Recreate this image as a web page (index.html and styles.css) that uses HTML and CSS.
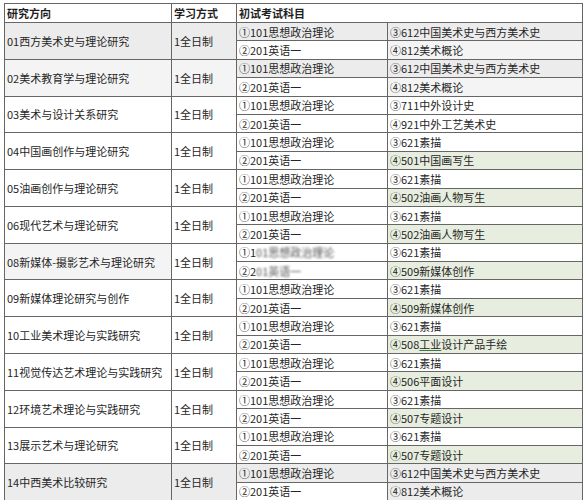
FILE: index.html
```html
<!DOCTYPE html>
<html lang="zh">
<head>
<meta charset="utf-8">
<link rel="stylesheet" href="styles.css">
</head>
<body>
<table class="exam">
<colgroup><col class="c1"><col class="c2"><col class="c3"><col class="c4"></colgroup>
<thead>
<tr class="head"><th>研究方向</th><th>学习方式</th><th colspan="2">初试考试科目</th></tr>
</thead>
<tbody>
<tr class="sub g"><td rowspan="2" class="g">01西方美术史与理论研究</td><td rowspan="2" class="g">1全日制</td><td class="g">①101思想政治理论</td><td class="g">③612中国美术史与西方美术史</td></tr>
<tr class="sub"><td>②201英语一</td><td class="lg">④812美术概论</td></tr>
<tr class="sub"><td rowspan="2" class="lg">02美术教育学与理论研究</td><td rowspan="2" class="lg">1全日制</td><td class="g">①101思想政治理论</td><td class="g">③612中国美术史与西方美术史</td></tr>
<tr class="sub"><td>②201英语一</td><td class="lg">④812美术概论</td></tr>
<tr class="sub"><td rowspan="2">03美术与设计关系研究</td><td rowspan="2">1全日制</td><td>①101思想政治理论</td><td>③711中外设计史</td></tr>
<tr class="sub"><td>②201英语一</td><td>④921中外工艺美术史</td></tr>
<tr class="sub"><td rowspan="2">04中国画创作与理论研究</td><td rowspan="2">1全日制</td><td>①101思想政治理论</td><td>③621素描</td></tr>
<tr class="sub"><td>②201英语一</td><td class="gr">④501中国画写生</td></tr>
<tr class="sub"><td rowspan="2">05油画创作与理论研究</td><td rowspan="2">1全日制</td><td>①101思想政治理论</td><td>③621素描</td></tr>
<tr class="sub"><td>②201英语一</td><td class="gr">④502油画人物写生</td></tr>
<tr class="sub"><td rowspan="2">06现代艺术与理论研究</td><td rowspan="2">1全日制</td><td>①101思想政治理论</td><td>③621素描</td></tr>
<tr class="sub"><td>②201英语一</td><td class="gr">④502油画人物写生</td></tr>
<tr class="sub"><td rowspan="2" class="lg">08新媒体-摄影艺术与理论研究</td><td rowspan="2">1全日制</td><td>①1<span class="blur">01思想政治理论</span></td><td>③621素描</td></tr>
<tr class="sub"><td>②2<span class="blur">01英语一</span></td><td class="gr">④509新媒体创作</td></tr>
<tr class="sub"><td rowspan="2">09新媒体理论研究与创作</td><td rowspan="2">1全日制</td><td>①101思想政治理论</td><td>③621素描</td></tr>
<tr class="sub"><td>②201英语一</td><td class="gr">④509新媒体创作</td></tr>
<tr class="sub"><td rowspan="2">10工业美术理论与实践研究</td><td rowspan="2">1全日制</td><td>①101思想政治理论</td><td>③621素描</td></tr>
<tr class="sub"><td>②201英语一</td><td class="gr">④508<span class="link">工业</span>设计产品手绘</td></tr>
<tr class="sub"><td rowspan="2">11视觉传达艺术理论与实践研究</td><td rowspan="2">1全日制</td><td>①101思想政治理论</td><td>③621素描</td></tr>
<tr class="sub"><td>②201英语一</td><td class="gr">④506平面设计</td></tr>
<tr class="sub"><td rowspan="2">12环境艺术理论与实践研究</td><td rowspan="2">1全日制</td><td>①101思想政治理论</td><td>③621素描</td></tr>
<tr class="sub"><td>②201英语一</td><td class="gr">④507专题设计</td></tr>
<tr class="sub"><td rowspan="2">13展示艺术与理论研究</td><td rowspan="2">1全日制</td><td>①101思想政治理论</td><td>③621素描</td></tr>
<tr class="sub"><td>②201英语一</td><td class="gr">④507专题设计</td></tr>
<tr class="sub"><td rowspan="2" class="g">14中西美术比较研究</td><td rowspan="2" class="g">1全日制</td><td class="g">①101思想政治理论</td><td class="g">③612中国美术史与西方美术史</td></tr>
<tr class="sub"><td>②201英语一</td><td class="g">④812美术概论</td></tr>
</tbody>
</table>
</body>
</html>
```
FILE: styles.css
```css
html, body {
  margin: 0;
  padding: 0;
  background: #ffffff;
}
body {
  padding: 3px 0 0 4px;
  font-family: "Noto Sans CJK SC", "Noto Sans", sans-serif;
  font-size: 11px;
  color: #262626;
}
.exam {
  border-collapse: collapse;
  table-layout: fixed;
  width: 578px;
  border: 1px solid #4a4a4a;
}
.c1 { width: 167px; }
.c2 { width: 65px; }
.c3 { width: 151px; }
.c4 { width: 195px; }
.exam th, .exam td {
  border: 1px solid #666666;
  padding: 0 0 0 2px;
  text-align: left;
  vertical-align: middle;
  white-space: nowrap;
  overflow: hidden;
  line-height: 14px;
}
.exam th {
  font-weight: bold;
  color: #1e1e1e;
}
.head { height: 19px; }
.sub { height: 18.4px; }
.g { background: #ececec; }
.lg { background: #f4f4f4; }
.gr { background: #e7eedf; }
.blur {
  filter: blur(1.2px);
  color: #555;
}
.link {
  text-decoration: underline;
  text-decoration-color: #3f7a3f;
}
```
